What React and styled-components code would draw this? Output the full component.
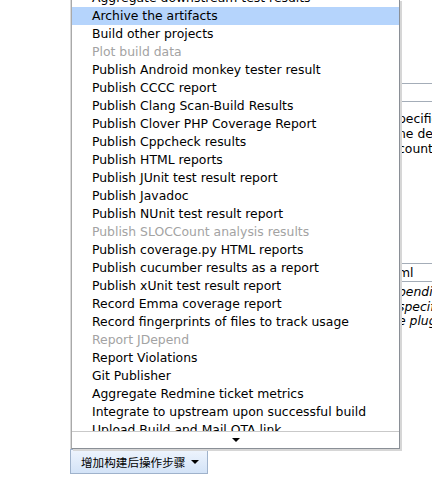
import React from "react";
import styled, { createGlobalStyle } from "styled-components";

const GlobalStyle = createGlobalStyle`
  body {
    margin: 0;
    background: #fff;
    font-family: "DejaVu Sans", Verdana, sans-serif;
    color: #000;
  }
`;

const Page = styled.div`
  position: relative;
  width: 432px;
  height: 493px;
  overflow: hidden;
`;

const Form = styled.div`
  height: 449px;
  padding: 83px 0 0 398px;
  box-sizing: border-box;
  font-size: 12.4px;
`;

const TextBox = styled.div`
  height: 19px;
  border-top: 1px solid #a4adb8;
  border-bottom: 1px solid #a4adb8;
  box-sizing: border-box;
  line-height: 17px;
  white-space: nowrap;
  margin-top: ${(p) => p.$top || 0}px;
`;

const Description = styled.div`
  margin-top: ${(p) => p.$top || 0}px;
  line-height: ${(p) => (p.$italic ? 14.5 : 15)}px;
  font-style: ${(p) => (p.$italic ? "italic" : "normal")};
  white-space: nowrap;
`;

const ButtonBar = styled.div`
  padding-left: 70px;
`;

const AddButton = styled.button`
  display: flex;
  align-items: center;
  gap: 6px;
  height: 25px;
  padding: 0 8px 0 10px;
  border: 1px solid #9fb2cb;
  background: linear-gradient(#eef4fd, #d3e3f7);
  font-family: "DejaVu Sans", "Noto Sans CJK SC", sans-serif;
  font-size: 11.6px;
  color: #000;
  cursor: pointer;
`;

const Caret = styled.span`
  width: 0;
  height: 0;
  border-left: 4px solid transparent;
  border-right: 4px solid transparent;
  border-top: 4px solid #000;
`;

const Menu = styled.div`
  position: absolute;
  left: 71px;
  top: -1px;
  width: 329px;
  box-sizing: border-box;
  border: 1px solid #8a8f96;
  border-left-color: #a9a9a9;
  background: #fff;
  box-shadow: 2px 2px 0 #d6d6d6, -1px 0 0 #dadada;
  z-index: 2;
`;

const Viewport = styled.div`
  height: 431px;
  overflow: hidden;
  border-bottom: 1px solid #c9c9c9;
`;

const List = styled.ul`
  list-style: none;
  margin: -11px 0 0;
  padding: 0;
`;

const Item = styled.li`
  height: 18px;
  line-height: 18px;
  padding-left: 20px;
  font-size: 12.4px;
  white-space: nowrap;
  color: ${(p) => (p.$disabled ? "#a3a3a3" : "#000")};
  background: ${(p) => (p.$active ? "#b5d4fc" : "transparent")};
`;

const ScrollFooter = styled.div`
  height: 16px;
  display: flex;
  align-items: center;
  justify-content: center;
`;

const items = [
  ["Aggregate downstream test results"],
  ["Archive the artifacts", "active"],
  ["Build other projects"],
  ["Plot build data", "disabled"],
  ["Publish Android monkey tester result"],
  ["Publish CCCC report"],
  ["Publish Clang Scan-Build Results"],
  ["Publish Clover PHP Coverage Report"],
  ["Publish Cppcheck results"],
  ["Publish HTML reports"],
  ["Publish JUnit test result report"],
  ["Publish Javadoc"],
  ["Publish NUnit test result report"],
  ["Publish SLOCCount analysis results", "disabled"],
  ["Publish coverage.py HTML reports"],
  ["Publish cucumber results as a report"],
  ["Publish xUnit test result report"],
  ["Record Emma coverage report"],
  ["Record fingerprints of files to track usage"],
  ["Report JDepend", "disabled"],
  ["Report Violations"],
  ["Git Publisher"],
  ["Aggregate Redmine ticket metrics"],
  ["Integrate to upstream upon successful build"],
  ["Upload Build and Mail OTA link"],
];

export default function App() {
  return (
    <>
      <GlobalStyle />
      <Page>
        <Form>
          <TextBox />
          <Description $top={9}>
            <div>pecific files</div>
            <div>ne details</div>
            <div>counts</div>
          </Description>
          <TextBox $top={107}>ml</TextBox>
          <Description $italic $top={3}>
            <div>pending</div>
            <div>specific</div>
            <div>e plugin</div>
          </Description>
        </Form>
        <ButtonBar>
          <AddButton type="button">
            增加构建后操作步骤
            <Caret />
          </AddButton>
        </ButtonBar>
        <Menu>
          <Viewport>
            <List>
              {items.map(([label, state]) => (
                <Item
                  key={label}
                  $active={state === "active"}
                  $disabled={state === "disabled"}
                >
                  {label}
                </Item>
              ))}
            </List>
          </Viewport>
          <ScrollFooter>
            <Caret />
          </ScrollFooter>
        </Menu>
      </Page>
    </>
  );
}
